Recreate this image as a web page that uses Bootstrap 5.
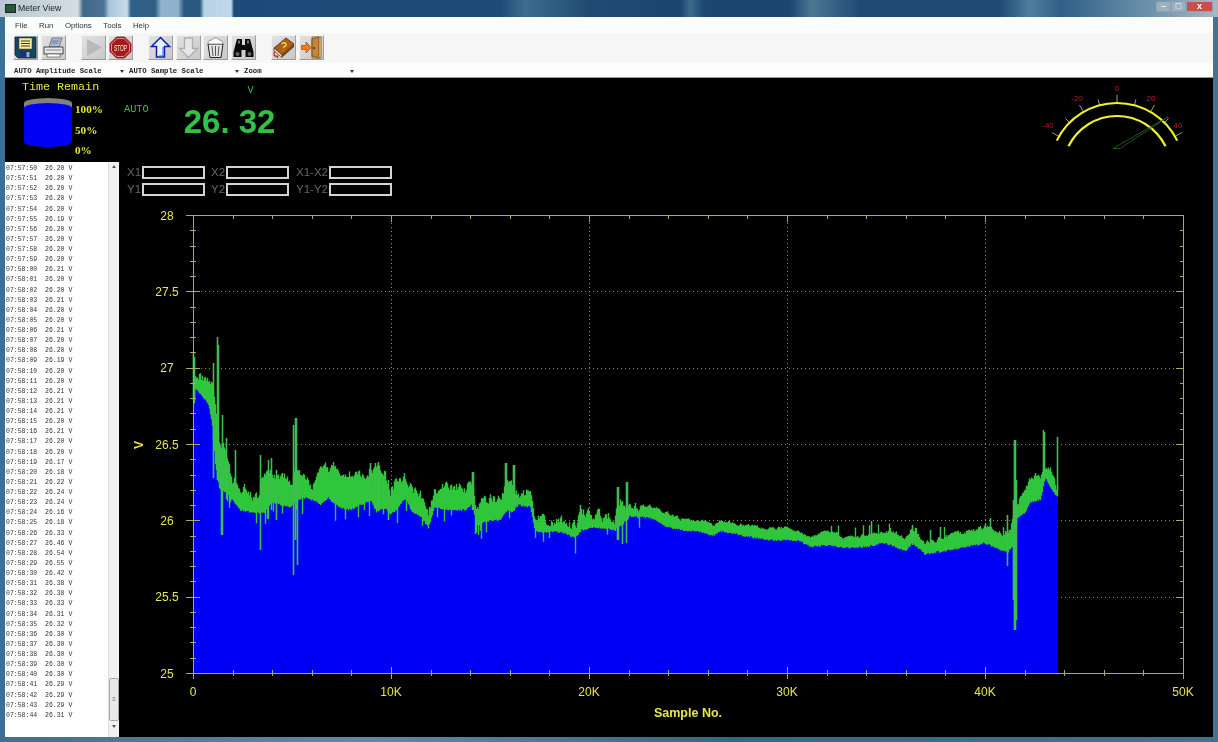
<!DOCTYPE html>
<html lang="en">
<head>
  <meta charset="UTF-8">
  <meta name="viewport" content="width=device-width, initial-scale=1.0">
  <title>Meter View</title>
  <link href="https://cdn.jsdelivr.net/npm/bootstrap@5.3.0/dist/css/bootstrap.min.css" rel="stylesheet">
  <style>
    html, body { height: 742px; overflow: hidden; }
    body {
      background: linear-gradient(90deg, #3f6f90 0, #5d8aa8 30%, #2f6a85 60%, #3f7590 100%);
      font-family: "Liberation Sans", Arial, sans-serif;
    }
    .win { height: 742px; padding: 0 5px 5px; filter: blur(.55px); }
    .title-bar {
      height: 17px; margin: 0 -5px; padding: 0 5px;
      font-size: 8.7px; color: #222;
      background: linear-gradient(90deg, #b9c8d2 0, #d3dde3 78px, #3f6788 83px, #4d7495 104px, #a9c5d9 109px, #c8dcea 127px, #2f5f87 131px, #2f5f87 155px, #8fb3cc 161px, #8fb3cc 178px, #2a5a82 184px, #2a5a82 200px, #b7d3e8 204px, #c0d8ea 231px, #1c4a78 234px, #1e4a76 500px, #3d6c90 525px, #1f4a72 590px, #1c4570 680px, #3a6a8c 690px, #1c4570 705px, #1c4570 790px, #4c7793 812px, #1f4a74 860px, #1f4a74 1000px, #4f7fa0 1030px, #2f5f86 1060px, #6d92ac 1150px, #a7b8c4 1218px);
    }
    .app-ico { width: 11px; height: 9px; background: #1f5c33; border: 1px solid #223; margin-right: 2px; }
    .cap-btn { height: 10px; margin-top: -3px; border: 1px solid #8da2b2; border-top: 0; color: #fff; font-size: 9px; line-height: 9px; text-align: center; background: #9fb0bd; }
    .cap-min, .cap-max { width: 15px; }
    .cap-close { width: 27px; background: #c8504c; font-weight: 700; }
    .menu-row { height: 16px; background: #fbfcfc; padding-left: 10px; gap: 11.5px; font-size: 7.8px; line-height: 17px; }
    .menu-row .nav-link { padding: 0; color: #333; }
    .tool-row { height: 30px; background: #f6f6f6; padding: 2px 0 0 8px; gap: 15px; }
    .tool-group { gap: 2.6px; }
    .tool-btn {
      width: 25px; height: 25px; padding: 0; border-radius: 0;
      background: linear-gradient(135deg, #e2e2e2, #c8c8c8);
      border: 1px solid; border-color: #f2f2f2 #a0a0a0 #9a9a9a #f2f2f2;
      display: flex; align-items: center; justify-content: center;
    }
    .tool-btn svg { width: 23px; height: 23px; }
    .combo-row { height: 15px; background: #fdfdfd; padding: 1px 0 0 9px; gap: 5px; border-bottom: 1px solid #999; }
    .combo-box {
      width: 110px; font-family: "Liberation Mono", monospace; font-weight: 700; font-size: 7.3px; line-height: 14px; color: #222;
    }
    .combo-arrow { width: 0; height: 0; margin: 6px 0 0; border: 2px solid transparent; border-top: 3px solid #333; border-bottom: 0; }
    .meter-top { height: 83px; background: #000; }
    .time-box { width: 114px; padding-left: 17px; }
    .time-title { font-family: "Liberation Mono", monospace; font-size: 11.7px; line-height: 19px; color: #e6e64c; }
    .cyl { margin-left: 2px; }
    .pct-col { margin: 2px 0 0 3px; font-family: "Liberation Serif", serif; font-weight: 700; font-size: 11.2px; line-height: 20.5px; color: #e4e43c; }
    .auto-tag { margin: 24px 0 0 5px; font-family: "Liberation Mono", monospace; font-size: 10.3px; line-height: 14px; color: #34c04e; }
    .read-box { width: 91px; margin-left: 35px; padding-top: 5px; }
    .read-unit { padding-right: 21px; text-align: right; font-family: "Liberation Mono", monospace; font-size: 10.3px; line-height: 14px; color: #34c04e; }
    .read-value { margin-top: 6px; font-weight: 700; font-size: 33px; line-height: 38px; white-space: nowrap; color: #2fc244; }
    .gauge { width: 173px; height: 83px; }
    .meter-body { height: 576px; background: #000; }
    .log-box { width: 114px; height: 575px; margin-top: 1px; background: #fff; padding-right: 11px; }
    .log-list { padding: 2px 0 0 1px; font-family: "Liberation Mono", monospace; font-size: 6.5px; }
    .log-list .list-group-item { background: transparent; color: #333; line-height: 10.13px; white-space: pre; }
    .scroll-col { width: 11px; background: #f1f1f1; border-left: 1px solid #ddd; }
    .scroll-up, .scroll-down { width: 0; height: 0; border: 2.5px solid transparent; }
    .scroll-up { border-bottom: 3px solid #555; border-top: 0; margin-top: 3px; }
    .scroll-down { border-top: 3px solid #555; border-bottom: 0; margin: 0 0 9px; }
    .scroll-thumb { width: 10px; height: 43px; margin-top: auto; margin-bottom: 4px; background: #e8e8e8; border: 1px solid #a8a8a8; border-radius: 2px; color: #666; font-size: 6px; line-height: 41px; text-align: center; }
    .cursor-rows { padding: 5px 0 0 8px; height: 37px; gap: 4px; }
    .cursor-row { gap: 6px; height: 13px; font-size: 11.5px; line-height: 13px; color: #666; }
    .cursor-pair { gap: 1px; }
    .cursor-name { text-align: right; }
    .cursor-name-a { width: 14px; }
    .cursor-name-b { width: 33px; }
    .cursor-val { width: 63px; height: 13px; border: 2px solid #d4d4d4; border-radius: 0; }
    .chart { width: 1094px; height: 539px; display: block; }
    .chart text { font-family: "Liberation Sans", Arial, sans-serif; }
    .gauge text { font-family: "Liberation Sans", Arial, sans-serif; font-size: 8px; fill: #b82020; text-anchor: middle; }
  </style>
</head>
<body>
  <div class="win d-flex flex-column">
    <div class="title-bar d-flex align-items-center">
      <span class="app-ico"></span>
      <span class="flex-grow-1">Meter View</span>
      <span class="cap-btn cap-min">&ndash;</span>
      <span class="cap-btn cap-max">&#9633;</span>
      <span class="cap-btn cap-close">x</span>
    </div>

    <nav class="nav menu-row">
      <a class="nav-link" href="#">File</a>
      <a class="nav-link" href="#">Run</a>
      <a class="nav-link" href="#">Options</a>
      <a class="nav-link" href="#">Tools</a>
      <a class="nav-link" href="#">Help</a>
    </nav>

    <div class="tool-row d-flex">
      <div class="tool-group d-flex">
        <button class="btn tool-btn" type="button" title="Save">
          <svg viewBox="0 0 23 23"><path d="M1 1H22V22H4L1 19Z" fill="#17475f" stroke="#0c2638" stroke-width=".8"/><rect x="5" y="2" width="13" height="11" fill="#f4ec9a" stroke="#444" stroke-width=".5"/><path d="M7 5H16M7 7.5H16M7 10H16" stroke="#3a3a3a"/><rect x="6" y="15" width="11" height="7" fill="#1a2f7a"/><rect x="12.500" y="16" width="3" height="5" fill="#9db2c2"/></svg>
        </button>
        <button class="btn tool-btn" type="button" title="Print">
          <svg viewBox="0 0 23 23"><path d="M7 11L10 2H20L17 11Z" fill="#aab8d8" stroke="#5a5a6a" stroke-width=".7"/><path d="M10 5H17M9.500 7H16" stroke="#6f7f9f"/><path d="M2 11H21V18H2Z" fill="#e9e9e9" stroke="#444"/><rect x="5" y="18" width="13" height="3" fill="#fff" stroke="#555" stroke-width=".7"/><path d="M4 14H19" stroke="#888"/></svg>
        </button>
      </div>
      <div class="tool-group d-flex">
        <button class="btn tool-btn" type="button" title="Run">
          <svg viewBox="0 0 23 23"><path d="M5 3L20 11.500L5 20Z" fill="#b9b9b9"/></svg>
        </button>
        <button class="btn tool-btn" type="button" title="Stop">
          <svg viewBox="0 0 23 23"><path d="M7.500 1H15.500L22 7.500V15.500L15.500 22H7.500L1 15.500V7.500Z" fill="#a81818" stroke="#8a1212" stroke-width=".8"/><path d="M8 2.500H15L20.500 8V15L15 20.500H8L2.500 15V8Z" fill="none" stroke="#e8c8c8" stroke-width=".7"/><text transform="translate(11.500 15) scale(.75 1.500)" text-anchor="middle" font-family="Liberation Sans, sans-serif" font-size="6.500" fill="#f4f4f4">STOP</text></svg>
        </button>
      </div>
      <div class="tool-group d-flex">
        <button class="btn tool-btn" type="button" title="Up">
          <svg viewBox="0 0 23 23"><path d="M11.500 1.500L20.500 10.500H15.500V21H7.500V10.500H2.500Z" fill="#e8f2ff" stroke="#0a1fa8" stroke-width="1.500"/><path d="M14 11V20H10" fill="none" stroke="#2a5fe0"/></svg>
        </button>
        <button class="btn tool-btn" type="button" title="Down">
          <svg viewBox="0 0 23 23"><path d="M7.500 2H15.500V12.500H20.500L11.500 21.500L2.500 12.500H7.500Z" fill="#e6e6e6" stroke="#aeaeae" stroke-width="1.300"/></svg>
        </button>
        <button class="btn tool-btn" type="button" title="Delete">
          <svg viewBox="0 0 23 23"><path d="M4 8L6 21.500H17L19 8Z" fill="#e6e6e6" stroke="#222"/><path d="M8 10L9 20M11.500 10V20M15 10L14 20" stroke="#555"/><path d="M4 8C4 3 8 5 9 3C11 1 14 2 15 4C18 4 19 6 19 8Z" fill="#fff" stroke="#666" stroke-width=".7"/></svg>
        </button>
        <button class="btn tool-btn" type="button" title="Find">
          <svg viewBox="0 0 23 23"><path d="M5 3H10V9H13V3H18L21.500 16V21H13.500V14H9.500V21H1.500V16Z" fill="#0a0a0a"/><circle cx="5.500" cy="18" r="2" fill="#666"/><circle cx="17.500" cy="18" r="2" fill="#666"/><rect x="6" y="4.500" width="2" height="3" fill="#777"/><rect x="15" y="4.500" width="2" height="3" fill="#777"/></svg>
        </button>
      </div>
      <div class="tool-group d-flex">
        <button class="btn tool-btn" type="button" title="Help">
          <svg viewBox="0 0 23 23"><path d="M2 12L14 2L22 8L10 19Z" fill="#a8601f" stroke="#4f2c0c" stroke-width=".8"/><path d="M2 12L10 19V21.500L2 15Z" fill="#f1e6c8" stroke="#4f2c0c" stroke-width=".7"/><path d="M10 19L22 8V11L10 21.500" fill="#7a4313"/><path d="M9.500 8C11 6 14.500 6.500 14 9C13.500 10.500 12 10 11.500 12M11 14L11 14.500" fill="none" stroke="#f7cf3b" stroke-width="1.500"/><path d="M3 15C1 18 2 21 5 20C6 19.500 6 21 5 22" fill="none" stroke="#c81e1e" stroke-width="1.300"/></svg>
        </button>
        <button class="btn tool-btn" type="button" title="Exit">
          <svg viewBox="0 0 23 23"><path d="M12 1H21V22H12Z" fill="#f1e2b0" stroke="#7a4a14" stroke-width=".8"/><path d="M12 3L19 1V22L12 20Z" fill="#c68436" stroke="#6a3f10" stroke-width=".8"/><circle cx="14" cy="12" r="1" fill="#4a2a08"/><path d="M1.500 9.500H6V6L11.500 11.500L6 17V13.500H1.500Z" fill="#ef7f1e" stroke="#a84a08" stroke-width=".7"/></svg>
        </button>
      </div>
    </div>

    <div class="combo-row d-flex">
      <div class="combo-box d-flex justify-content-between"><span>AUTO Amplitude Scale</span><span class="combo-arrow"></span></div>
      <div class="combo-box d-flex justify-content-between"><span>AUTO Sample Scale</span><span class="combo-arrow"></span></div>
      <div class="combo-box d-flex justify-content-between"><span>Zoom</span><span class="combo-arrow"></span></div>
    </div>

    <div class="meter-top d-flex">
      <div class="time-box">
        <div class="time-title">Time Remain</div>
        <div class="d-flex">
          <svg class="cyl" width="48" height="52" viewBox="0 0 48 52">
            <path d="M0 6V45A24 5 0 0 0 48 45V6Z" fill="#0000f5"/>
            <path d="M0 6A24 5 0 0 1 48 6V11A24 5 0 0 0 0 11Z" fill="#808080"/>
          </svg>
          <div class="pct-col"><div>100%</div><div>50%</div><div>0%</div></div>
        </div>
      </div>
      <div class="auto-tag">AUTO</div>
      <div class="read-box">
        <div class="read-unit">V</div>
        <div class="read-value">26. 32</div>
      </div>
      <svg class="gauge ms-auto" viewBox="1040 78 173 83" id="gauge"></svg>
    </div>

    <div class="meter-body d-flex">
      <div class="log-box d-flex position-relative">
        <div class="list-group list-group-flush log-list flex-grow-1 rounded-0" id="logList"></div>
        <div class="scroll-col position-absolute top-0 end-0 h-100 d-flex flex-column align-items-center">
          <span class="scroll-up"></span>
          <span class="scroll-thumb">&equiv;</span>
          <span class="scroll-down"></span>
        </div>
      </div>
      <div class="flex-grow-1">
        <div class="cursor-rows d-flex flex-column">
          <div class="cursor-row d-flex">
            <div class="cursor-pair d-flex"><span class="cursor-name cursor-name-a">X1</span><span class="cursor-val"></span></div>
            <div class="cursor-pair d-flex"><span class="cursor-name cursor-name-a">X2</span><span class="cursor-val"></span></div>
            <div class="cursor-pair d-flex"><span class="cursor-name cursor-name-b">X1-X2</span><span class="cursor-val"></span></div>
          </div>
          <div class="cursor-row d-flex">
            <div class="cursor-pair d-flex"><span class="cursor-name cursor-name-a">Y1</span><span class="cursor-val"></span></div>
            <div class="cursor-pair d-flex"><span class="cursor-name cursor-name-a">Y2</span><span class="cursor-val"></span></div>
            <div class="cursor-pair d-flex"><span class="cursor-name cursor-name-b">Y1-Y2</span><span class="cursor-val"></span></div>
          </div>
        </div>
        <svg class="chart" id="chart" viewBox="119 198 1094 539"></svg>
      </div>
    </div>
  </div>

  <script src="https://cdn.jsdelivr.net/npm/bootstrap@5.3.0/dist/js/bootstrap.bundle.min.js"></script>
  <script>
    // log list
    const logVals = [20,20,20,20,20,19,20,20,20,20,21,20,20,21,20,20,21,20,20,19,20,20,21,21,21,20,21,20,20,17,18,22,24,24,16,18,33,46,54,55,42,38,38,33,31,32,30,30,30,30,30,29,29,29,31];
    const pad = n => String(n).padStart(2, '0');
    document.getElementById('logList').innerHTML = logVals.map((v, i) => {
      const s = 50 + i;
      return '<div class="list-group-item p-0 border-0">07:' + (57 + Math.floor(s / 60)) + ':' + pad(s % 60) + '  26.' + v + ' V</div>';
    }).join('');

    // gauge
    let g = '';
    const cx = 1117, cy = 170;
    const polar = (r, deg) => [cx + r * Math.sin(deg * Math.PI / 180), cy - r * Math.cos(deg * Math.PI / 180)];
    const arc = (r, a) => {
      const p = polar(r, -a), q = polar(r, a);
      return '<path d="M' + p[0] + ' ' + p[1] + 'A' + r + ' ' + r + ' 0 0 1 ' + q[0] + ' ' + q[1] + '" fill="none" stroke="#f0f030" stroke-width="2.2"/>';
    };
    for (let a = -60; a <= 60; a += 15) {
      const p = polar(67, a), q = polar(a % 30 === 0 ? 75 : 73, a);
      g += '<path d="M' + p[0] + ' ' + p[1] + 'L' + q[0] + ' ' + q[1] + '" stroke="#a89c70"/>';
    }
    g += arc(67, 64) + arc(54, 64);
    g += '<path d="M1113 148.500H1120L1168 117Z" fill="none" stroke="#2a6a30" stroke-width=".8"/>';
    [['-40', 1048, 128], ['-20', 1077, 101], ['0', 1117, 91], ['20', 1151, 101], ['40', 1178, 128]].forEach(t => {
      g += '<text x="' + t[1] + '" y="' + t[2] + '">' + t[0] + '</text>';
    });
    document.getElementById('gauge').innerHTML = g;

    // chart: page pixel coords, [x, green top, blue top]
    const env = [[194,380,388],[200,378,394],[208,378,404],[212,385,425],[215,400,465],[219,440,488],[225,452,492],[232,478,500],[240,486,510],[250,492,512],[258,497,513],[264,470,512],[272,472,502],[280,478,505],[290,480,507],[296,470,500],[305,482,498],[312,485,500],[320,464,504],[328,472,498],[335,468,505],[342,476,508],[350,472,510],[358,474,506],[370,470,500],[376,472,512],[385,470,508],[390,495,515],[396,480,510],[405,478,498],[412,490,512],[420,490,516],[428,518,528],[434,488,508],[450,487,510],[465,488,510],[472,478,504],[476,505,526],[490,498,520],[500,498,520],[507,474,510],[512,488,512],[518,492,505],[530,493,507],[535,518,532],[560,519,532],[575,528,538],[581,510,530],[590,516,528],[600,516,528],[615,516,530],[620,504,526],[630,505,516],[650,506,518],[665,512,526],[672,515,528],[680,519,530],[700,520,532],[712,525,536],[720,520,531],[740,524,535],[765,528,540],[785,528,540],[800,532,541],[810,537,547],[825,531,545],[845,537,548],[865,535,547],[885,530,543],[905,538,551],[912,527,543],[925,543,554],[950,535,550],[985,527,543],[997,532,549],[1008,530,552],[1013,520,545],[1017,505,518],[1024,490,514],[1030,477,502],[1040,477,500],[1045,468,478],[1050,470,488],[1056,488,496],[1058,488,496]];
    const spikes = [[193,352,400],[194,357,400],[213,363,478],[217,337,480],[218,345,470],[221,460,535],[222,415,535],[226,438,490],[235,450,495],[260,455,550],[268,460,500],[271,458,510],[276,470,520],[293,425,575],[295,418,540],[296,418,510],[297,470,565],[370,463,495],[375,463,490],[378,462,510],[388,480,520],[472,472,510],[473,472,510],[505,463,500],[506,463,500],[513,465,500],[514,465,500],[580,505,525],[617,487,540],[618,487,540],[622,515,544],[626,482,543],[627,482,520],[871,521,535],[912,525,545],[930,530,545],[940,527,540],[985,524,540],[990,518,535],[1007,515,566],[1013,500,600],[1014,440,630],[1015,440,630],[1016,480,620],[1043,430,480],[1044,432,480],[1057,437,490]];
    let seed = 12345;
    const rnd = () => { seed = (seed * 1103515 + 12345) % 2147483648; return seed / 2147483648; };

    let blue = '', green = '', k = 0, wobble = 0;
    for (let x = 194; x <= 1057; x++) {
      while (env[k + 1][0] < x) k++;
      const a = env[k], b = env[k + 1], t = (x - a[0]) / (b[0] - a[0]);
      const amp = x < 640 ? 11 : (x > 1000 ? 7 : (x > 830 ? 4 : 3));
      // smoothed noise so the band stays solid, not hair-like
      wobble = wobble * 0.55 + (rnd() - 0.5) * 0.9;
      const gt = a[1] + (b[1] - a[1]) * t + wobble * amp;
      let bt = a[2] + (b[2] - a[2]) * t + (rnd() - 0.5) * 2;
      let gb = bt;
      if (x < 640 && rnd() < 0.08) gb = bt + 4 + rnd() * 12;
      blue += 'M' + (x + 0.5) + ' ' + bt.toFixed(1) + 'V673';
      green += 'M' + (x + 0.5) + ' ' + gt.toFixed(1) + 'V' + gb.toFixed(1);
      if (x > 830 && x < 1010 && rnd() < 0.08) green += 'M' + (x + 0.5) + ' ' + (gt - 3 - rnd() * 7).toFixed(1) + 'V' + gt.toFixed(1);
    }
    const spikePath = spikes.map(s => 'M' + (s[0] + 0.5) + ' ' + s[1] + 'V' + s[2]).join('');

    const yPos = v => 673 - (v - 25) * 458 / 3;
    const xPos = s => 193 + s * 990 / 50000;
    let grid = '', ticks = '', labels = '';
    for (let i = 1; i < 6; i++) {
      const y = Math.round(yPos(25 + i / 2)) + 0.5;
      grid += 'M193 ' + y + 'H1183';
    }
    for (let i = 1; i < 5; i++) {
      const x = Math.round(xPos(i * 10000)) + 0.5;
      grid += 'M' + x + ' 215V673';
    }
    for (let i = 0; i <= 30; i++) {
      const y = Math.round(yPos(25 + i / 10)) + 0.5;
      const major = i % 5 === 0;
      ticks += 'M' + (major ? 186 : 190) + ' ' + y + 'H' + (major ? 200 : 196);
      ticks += 'M' + (major ? 1176 : 1180) + ' ' + y + 'H1183';
    }
    for (let i = 0; i <= 25; i++) {
      const x = Math.round(xPos(i * 2000)) + 0.5;
      const major = i % 5 === 0;
      ticks += 'M' + x + ' ' + (major ? 667 : 670) + 'V' + (major ? 679 : 676);
      ticks += 'M' + x + ' 215V' + (major ? 222 : 219);
    }
    ['25', '25.5', '26', '26.5', '27', '27.5', '28'].forEach((l, i) => {
      labels += '<text x="167" y="' + (yPos(25 + i / 2) + 4.5) + '" text-anchor="middle">' + l + '</text>';
    });
    ['0', '10K', '20K', '30K', '40K', '50K'].forEach((l, i) => {
      labels += '<text x="' + xPos(i * 10000) + '" y="696" text-anchor="middle">' + l + '</text>';
    });
    document.getElementById('chart').innerHTML =
      '<path d="' + grid + '" stroke="#8f8f78" stroke-dasharray="1 3" fill="none"/>' +
      '<path d="' + blue + '" stroke="#0000f8" fill="none"/>' +
      '<path d="' + green + '" stroke="#30c63c" stroke-width="1.4" fill="none"/>' +
      '<path d="' + spikePath + '" stroke="#3fbd52" stroke-width="1.6" fill="none"/>' +
      '<path d="M193.500 215.500H1183.500V673.500H193.500Z" stroke="#a9a968" fill="none"/>' +
      '<path d="' + ticks + '" stroke="#a9a968" fill="none"/>' +
      '<g font-size="12" fill="#e6e64c">' + labels + '</g>' +
      '<text x="688" y="717" text-anchor="middle" font-size="12.500" font-weight="700" fill="#e6e64c">Sample No.</text>' +
      '<text transform="translate(143 445) rotate(-90)" text-anchor="middle" font-size="12" font-weight="700" fill="#e6e64c">V</text>';
  </script>
</body>
</html>
